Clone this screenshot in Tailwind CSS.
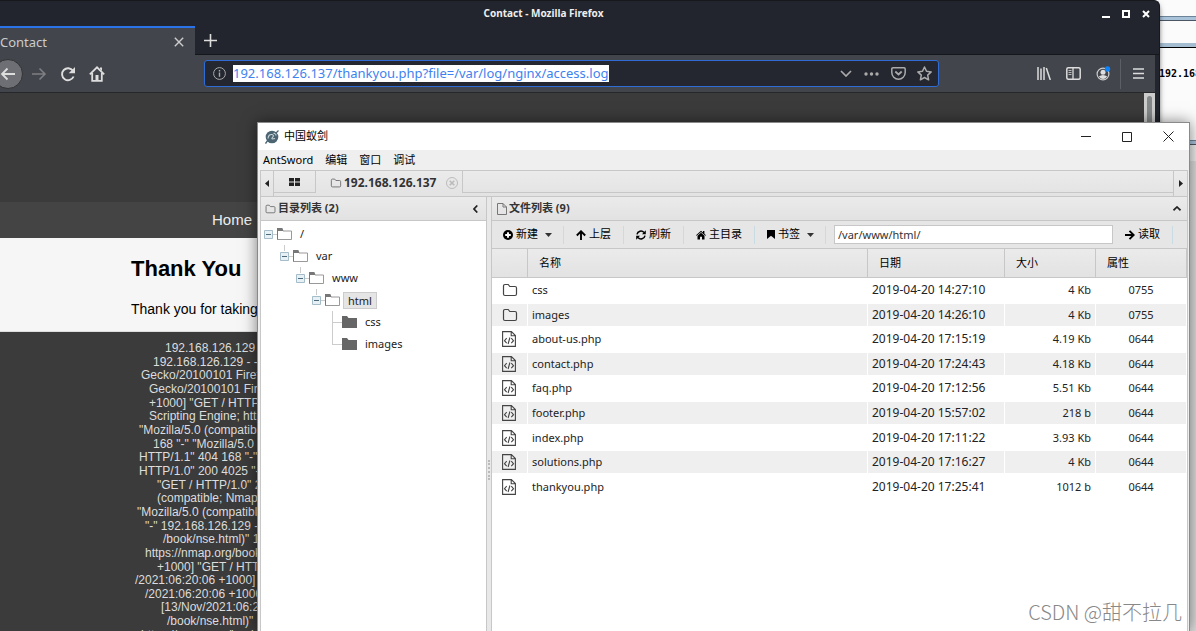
<!DOCTYPE html>
<html lang="zh-CN">
<head>
<meta charset="utf-8">
<meta name="viewport" content="width=device-width, initial-scale=1">
<title>Contact - Mozilla Firefox</title>
<script src="https://cdn.jsdelivr.net/npm/@tailwindcss/browser@4"></script>
</head>
<body class="relative h-screen overflow-hidden bg-[#fbfbfb] font-['Noto_Sans','Noto_Sans_CJK_SC',sans-serif] text-xs text-[#222]">

<svg class="hidden">
  <symbol id="folder" viewBox="0 0 16 14"><path d="M1.5 3.2Q1.5 1.5 3 1.5h3.2l1.6 2H13q1.5 0 1.5 1.5v6q0 1.5-1.5 1.5H3q-1.5 0-1.5-1.5z" fill="none" stroke="currentColor" stroke-width="1.2"/></symbol>
  <symbol id="tree-open" viewBox="0 0 15 12"><path d="M.5 11.5v-11H5l1 2.5h8.500v8.500z" fill="#fff" stroke="#999"/><path d="M0 0h5.300l1 3H1v8.500H0z" fill="#777"/></symbol>
  <symbol id="tree-closed" viewBox="0 0 15 12"><path d="M0 0h5l1.500 2H15v10H0z" fill="#666"/></symbol>
  <symbol id="code" viewBox="0 0 14 16"><path d="M.6.6h8.800l4 4v10.800H.6zM9.200.8v4h4" fill="none" stroke="#444" stroke-width="1.1"/><path d="M4.700 7.200 2.500 9.700l2.200 2.500M9.300 7.200l2.200 2.500-2.200 2.500M7.900 6.500l-1.800 6.500" fill="none" stroke="#444" stroke-width="1.1"/></symbol>
  <symbol id="minus" viewBox="0 0 9 9"><path d="M.5.5h8v8h-8z" fill="#e6f0f5" stroke="#a5bdc9"/><path d="M2 4.500h5" stroke="#4b6b7b"/></symbol>
</svg>

<!-- Window behind the browser, at the right edge of the desktop -->
<div class="absolute inset-y-0 right-0 flex w-10 flex-col bg-[#fbfbfb]">
  <div class="mt-4 h-[5px] border-y border-t-[#6d8498] border-b-[#4a5561] bg-[#a9c3da]"></div>
  <div class="mt-[22px] h-[5px] border-b border-black bg-[#a5bdd0]"></div>
  <div class="mt-5 pl-[3px] text-[10px] leading-3 font-bold text-black font-['DejaVu_Sans_Mono',monospace]">192.168</div>
  <div class="mt-[60px] h-[5px] border-y border-t-[#6d8498] border-b-[#4a5561] bg-[#a9c3da]"></div>
  <div class="h-4 bg-[#eee]"></div>
  <div class="grow bg-[#ddd]"></div>
</div>

<!-- Browser -->
<section class="absolute inset-y-0 left-0 right-9 flex flex-col overflow-hidden rounded-tr-md border-t border-r border-t-[#16181c] border-r-[#16181c] bg-[#22252d] text-[#ddd] shadow-md shadow-black/50">
  <header class="relative flex h-[25px] shrink-0 items-center justify-end gap-1 pr-[5px]">
    <h1 class="absolute inset-x-0 top-1 pr-[72px] text-center text-[10px] leading-4 font-bold text-[#eee]">Contact - Mozilla Firefox</h1>
    <button aria-label="Minimize" class="relative flex size-4 items-center justify-center"><svg class="size-2" viewBox="0 0 8 8"><path d="M0 7h8" stroke="#fff" stroke-width="2"/></svg></button>
    <button aria-label="Maximize" class="relative flex size-4 items-center justify-center"><svg class="size-2" viewBox="0 0 8 8"><path d="M1 1h6v6H1z" fill="none" stroke="#fff" stroke-width="2"/></svg></button>
    <button aria-label="Close" class="relative flex size-4 items-center justify-center"><svg class="size-2" viewBox="0 0 8 8"><path d="m1 1 6 6M7 1 1 7" stroke="#fff" stroke-width="2"/></svg></button>
  </header>
  <div class="flex h-[29px] shrink-0 border-b border-[#15171b]">
    <div class="-mb-px flex w-[195px] items-center justify-between border-t-2 border-[#2a74e8] bg-[#42454c] pr-[10px]">
      <span class="text-[13px] leading-4 text-[#ccc]">Contact</span>
      <button aria-label="Close tab" class="p-px"><svg class="size-[10px]" viewBox="0 0 10 10"><path d="m.8.8 8.400 8.400M9.200.8.8 9.200" stroke="#ccc" stroke-width="1.4"/></svg></button>
    </div>
    <button aria-label="New tab" class="px-[9px]"><svg class="size-[13px]" viewBox="0 0 13 13"><path d="M6.500 0v13M0 6.500h13" stroke="#ddd" stroke-width="1.6"/></svg></button>
  </div>
  <nav aria-label="Toolbar" class="mr-1 flex h-[38px] shrink-0 items-center border-b border-[#25272b] bg-[#42454c]">
    <button aria-label="Back" class="-ml-[7px] flex size-[30px] items-center justify-center rounded-full border border-[#333] bg-[#6d6f74]"><svg class="size-4" viewBox="0 0 16 16"><path d="M15 8H2M7.500 2.500 2 8l5.500 5.500" fill="none" stroke="#ddd" stroke-width="1.800"/></svg></button>
    <button aria-label="Forward" class="ml-2"><svg class="size-4" viewBox="0 0 16 16"><path d="M1 8h13M8.500 2.500 14 8l-5.500 5.500" fill="none" stroke="#7d7f84" stroke-width="1.600"/></svg></button>
    <button aria-label="Reload" class="ml-[13px]"><svg class="size-4" viewBox="0 0 16 16"><path d="M13 4.800A6 6 0 1 0 13.600 10.500" fill="none" stroke="#ddd" stroke-width="1.900"/><path d="M15 1v6.300H8.700z" fill="#ddd"/></svg></button>
    <button aria-label="Home" class="ml-[13px]"><svg class="size-4" viewBox="0 0 16 16"><path d="m.8 8.300 7.200-7 7.200 7M3.200 7v7.800h9.600V7" fill="none" stroke="#ddd" stroke-width="1.800"/><path d="M6.500 15V9h3v6zM11 1.500h2V5l-2-2z" fill="#ddd"/></svg></button>
    <div class="ml-[99px] flex h-[27px] w-[735px] items-center rounded-[3px] border border-[#2f6cd6] bg-[#242730] pr-[6px] pl-2 text-[#aaa]">
      <svg class="mr-[7px] size-[13px] shrink-0" viewBox="0 0 13 13"><circle cx="6.500" cy="6.500" r="5.900" fill="none" stroke="currentColor"/><path d="M6.500 5.500v4.200M6.500 3v1.500" stroke="currentColor" stroke-width="1.400"/></svg>
      <input aria-label="Address" class="field-sizing-content h-[17px] bg-white text-[13px] leading-[17px] text-[#3d82f0] outline-none" value="192.168.126.137/thankyou.php?file=/var/log/nginx/access.log">
      <div class="ml-auto flex items-center gap-3">
        <button aria-label="History"><svg class="h-[7px] w-3" viewBox="0 0 12 7"><path d="m1 1 5 5 5-5" fill="none" stroke="currentColor" stroke-width="1.700"/></svg></button>
        <button aria-label="Page actions"><svg class="h-1 w-[15px]" viewBox="0 0 15 4"><circle cx="2" cy="2" r="1.700" fill="currentColor"/><circle cx="7.500" cy="2" r="1.700" fill="currentColor"/><circle cx="13" cy="2" r="1.700" fill="currentColor"/></svg></button>
        <button aria-label="Save to Pocket" class="-mr-px"><svg class="h-[13px] w-[15px]" viewBox="0 0 15 13"><path d="M2 .8h11q1.200 0 1.200 1.200v3.500a6.700 6.700 0 0 1-13.400 0V2Q.8.800 2 .8z" fill="none" stroke="currentColor" stroke-width="1.500"/><path d="m4.300 4.500 3.200 3 3.200-3" fill="none" stroke="currentColor" stroke-width="1.800"/></svg></button>
        <button aria-label="Bookmark"><svg class="size-[15px]" viewBox="0 0 15 15"><path d="m7.500 1 2 4.300 4.700.6-3.500 3.200.9 4.700-4.100-2.300-4.100 2.300.9-4.700L.8 5.900l4.700-.6z" fill="none" stroke="currentColor" stroke-width="1.500" stroke-linejoin="round"/></svg></button>
      </div>
    </div>
    <div class="ml-auto flex items-center">
      <button aria-label="Library"><svg class="h-[13px] w-[14px]" viewBox="0 0 14 13"><path d="M1 0v13M4 1.500V13M7 0v13" stroke="#ddd" stroke-width="1.500"/><path d="m9.300 1 4 12" stroke="#ddd" stroke-width="1.500"/></svg></button>
      <button aria-label="Sidebar" class="ml-[15px]"><svg class="h-[13px] w-[15px]" viewBox="0 0 15 13"><rect x=".8" y=".8" width="13.400" height="11.400" rx="1.500" fill="none" stroke="#ddd" stroke-width="1.500"/><path d="M7 1v11" stroke="#ddd" stroke-width="1.300"/><path d="M2.500 3.500h3M2.500 5.500h3M2.500 7.500h3" stroke="#bbb"/></svg></button>
      <button aria-label="Account" class="ml-[15px]"><svg class="size-[15px]" viewBox="0 0 15 15"><circle cx="7" cy="8" r="5.900" fill="none" stroke="#ccc" stroke-width="1.200"/><circle cx="7" cy="6.200" r="2.500" fill="#ddd"/><path d="M2.800 10.500q4.200-3 8.400 0Q7 15.500 2.800 10.500z" fill="#ddd"/><circle cx="11.500" cy="2.900" r="2.700" fill="#0a84ff"/></svg></button>
      <span class="ml-[9px] h-[30px] border-l border-[#5c5f66]"></span>
      <button aria-label="Menu" class="mr-[11px] ml-3"><svg class="h-[11px] w-[11px]" viewBox="0 0 11 11"><path d="M0 1h11M0 5.500h11M0 10h11" stroke="#ddd" stroke-width="1.600"/></svg></button>
    </div>
  </nav>
  <div class="mr-1 flex min-h-0 grow overflow-hidden bg-[#3b3b3b] font-['Liberation_Sans',sans-serif]">
    <main class="min-w-0 grow">
      <div class="h-[109px]"></div>
      <div class="flex h-9 items-center bg-[#444] pl-[212px] text-[15px] text-[#eee]"><a href="#">Home</a></div>
      <article class="h-[94px] border-b border-[#ddd] bg-[#f6f6f6] pt-[18px] pl-[131px] text-black">
        <h2 class="text-[22px] leading-[26px] font-bold">Thank You</h2>
        <p class="mt-[18px] text-sm leading-[18px]">Thank you for taking the time to contact us</p>
      </article>
      <div class="mt-[10px] ml-[133px] flex h-[300px] flex-col justify-between leading-[13px] whitespace-nowrap text-[#ddd]">
        <p class="pl-8">192.168.126.129 - -</p>
        <p class="pl-5">192.168.126.129 - - </p>
        <p class="pl-2">Gecko/20100101 Firefox</p>
        <p class="pl-4">Gecko/20100101 Firefox</p>
        <p class="pl-4">+1000] "GET / HTTP/1.0"</p>
        <p class="pl-4">Scripting Engine; https:</p>
        <p class="pl-1.5">"Mozilla/5.0 (compatible;</p>
        <p class="pl-5">168 "-" "Mozilla/5.0 (</p>
        <p class="pl-1.5">HTTP/1.1" 404 168 "-"</p>
        <p class="pl-1.5">HTTP/1.0" 200 4025 "-"</p>
        <p class="pl-6">"GET / HTTP/1.0" 200</p>
        <p class="pl-6">(compatible; Nmap</p>
        <p class="pl-1">"Mozilla/5.0 (compatible;</p>
        <p class="pl-3">"-" 192.168.126.129 - -</p>
        <p class="pl-7.5">/book/nse.html)" 192</p>
        <p class="pl-3">https://nmap.org/book/</p>
        <p class="pl-6">+1000] "GET / HTTP</p>
        <p class="pl-0.5">/2021:06:20:06 +1000] "</p>
        <p class="pl-3">/2021:06:20:06 +1000]</p>
        <p class="pl-7">[13/Nov/2021:06:20</p>
        <p class="pl-8.5">/book/nse.html)" 192</p>
        <p class="pl-2">https://nmap.org/book/</p>
      </div>
    </main>
    <div class="w-[11px] bg-[#ccc] px-[3px] pt-[3px]"><div class="h-24 rounded-full bg-[#858888]"></div></div>
  </div>
</section>

<!-- AntSword -->
<section class="absolute top-[122px] right-[6px] bottom-0 left-[257px] flex flex-col border border-b-0 border-[#8a8a8a] bg-[#efefef] shadow-[0_0_14px_rgba(0,0,0,0.5)]">
  <header class="flex h-[27px] shrink-0 items-center bg-white pr-[15px] pl-[7px]">
    <svg class="size-[14px]" viewBox="0 0 14 14"><circle cx="7" cy="7" r="6.300" fill="#4c6572"/><path d="M3 8.500q.5-4.500 4-4 2.500.8.500 3t2.500 1M8.500 3.500q2.500-.5 2.500 2" fill="none" stroke="#c9d5da" stroke-width="1.100"/><path d="M.5 13.500 3 10M13.500.5 10.500 3.500" stroke="#4c6572" stroke-width="1.300"/></svg>
    <h1 class="ml-[5px] text-[11px] text-black">中国蚁剑</h1>
    <div class="ml-auto flex items-center gap-[31px]">
      <button aria-label="最小化"><svg class="size-[10px]" viewBox="0 0 10 10"><path d="M0 4.500h10" stroke="#222"/></svg></button>
      <button aria-label="最大化"><svg class="size-[10px]" viewBox="0 0 10 10"><path d="M.5.5h9v9h-9z" fill="none" stroke="#222"/></svg></button>
      <button aria-label="关闭"><svg class="size-[11px]" viewBox="0 0 11 11"><path d="m.5.5 10 10M10.500.5l-10 10" stroke="#222"/></svg></button>
    </div>
  </header>
  <nav class="flex h-5 shrink-0 items-center gap-3 pl-[5px] text-[11px] text-black">
    <button>AntSword</button><button>编辑</button><button>窗口</button><button>调试</button>
  </nav>
  <div class="mr-px ml-[2px] flex min-h-0 grow flex-col border border-b-0 border-[#c7c7c7] bg-[#e8e8e8]">
    <div class="flex h-[26px] shrink-0 border-b border-[#c7c7c7] bg-linear-to-b from-[#ebebeb] to-[#e3e3e3]">
      <button aria-label="向左" class="flex w-[13px] items-center justify-center border-r border-[#c7c7c7]"><svg class="h-[7px] w-1" viewBox="0 0 4 7"><path d="M4 0v7L0 3.500z" fill="#222"/></svg></button>
      <button aria-label="主页" class="mb-[3px] flex w-[42px] items-center justify-center border-r border-b border-[#c7c7c7]"><svg class="h-2 w-[11px]" viewBox="0 0 11 8"><path d="M0 0h5v3.500H0zM6 0h5v3.500H6zM0 4.500h5V8H0zM6 4.500h5V8H6z" fill="#222"/></svg></button>
      <div class="mb-[2px] flex w-[146px] items-center pl-[14px]">
        <svg class="h-[10px] w-3 text-[#666]"><use href="#folder"/></svg>
        <span class="ml-[2px] text-xs font-bold text-[#333]">192.168.126.137</span>
        <button aria-label="关闭标签" class="ml-auto pr-1"><svg class="size-3" viewBox="0 0 12 12"><circle cx="6" cy="6" r="5.500" fill="none" stroke="#bbb"/><path d="m3.700 3.700 4.600 4.600M8.300 3.700 3.700 8.300" stroke="#bbb" stroke-width="1.600"/></svg></button>
      </div>
      <div class="mb-[3px] grow border-b border-l border-[#c7c7c7]"></div>
      <button aria-label="向右" class="flex w-[14px] items-center justify-center border-l border-[#c7c7c7]"><svg class="h-[7px] w-1" viewBox="0 0 4 7"><path d="M0 0v7l4-3.500z" fill="#222"/></svg></button>
    </div>
    <div class="flex min-h-0 grow">
      <aside class="flex w-[226px] shrink-0 flex-col border-r border-[#c7c7c7]">
        <div class="flex h-6 shrink-0 items-center border-b border-[#c7c7c7] bg-linear-to-b from-[#ebebeb] to-[#e2e2e2] pr-2 pl-1">
          <svg class="h-[10px] w-[11px] text-[#666]"><use href="#folder"/></svg>
          <h2 class="ml-[2px] text-[11px] font-bold text-[#333]">目录列表 (2)</h2>
          <button aria-label="折叠目录" class="ml-auto"><svg class="h-2 w-[5px]" viewBox="0 0 5 8"><path d="M4.300.5 1 4l3.300 3.500" fill="none" stroke="#222" stroke-width="1.700"/></svg></button>
        </div>
        <div class="grow bg-white pt-[2px] pl-[3px] text-[11px] leading-4">
          <div class="flex h-[22px] items-center"><svg class="size-[9px]"><use href="#minus"/></svg><i class="w-1 border-t border-[#ccc]"></i><svg class="h-3 w-[15px]"><use href="#tree-open"/></svg><span class="ml-2">/</span></div>
          <div class="ml-4">
            <div class="relative flex h-[22px] items-center"><i class="absolute top-0 left-1 h-[6px] border-l border-[#ccc]"></i><svg class="size-[9px]"><use href="#minus"/></svg><i class="w-1 border-t border-[#ccc]"></i><svg class="h-3 w-[15px]"><use href="#tree-open"/></svg><span class="ml-2">var</span></div>
            <div class="ml-4">
              <div class="relative flex h-[22px] items-center"><i class="absolute top-0 left-1 h-[6px] border-l border-[#ccc]"></i><svg class="size-[9px]"><use href="#minus"/></svg><i class="w-1 border-t border-[#ccc]"></i><svg class="h-3 w-[15px]"><use href="#tree-open"/></svg><span class="ml-2">www</span></div>
              <div class="ml-4">
                <div class="relative flex h-[22px] items-center"><i class="absolute top-0 left-1 h-[6px] border-l border-[#ccc]"></i><svg class="size-[9px]"><use href="#minus"/></svg><i class="w-1 border-t border-[#ccc]"></i><svg class="h-3 w-[15px]"><use href="#tree-open"/></svg><span class="ml-[3px] border border-[#ccc] bg-[#e5e5e5] px-1 leading-[15px]">html</span></div>
                <div class="ml-5">
                  <div class="flex h-[22px] items-center border-l border-[#ccc]"><i class="w-[9px] border-t border-[#ccc]"></i><svg class="h-3 w-[15px]"><use href="#tree-closed"/></svg><span class="ml-2">css</span></div>
                  <div class="relative flex h-[22px] items-center"><i class="absolute top-0 left-0 h-[11px] border-l border-[#ccc]"></i><i class="w-[10px] border-t border-[#ccc]"></i><svg class="h-3 w-[15px]"><use href="#tree-closed"/></svg><span class="ml-2">images</span></div>
                </div>
              </div>
            </div>
          </div>
        </div>
      </aside>
      <div class="flex w-1 shrink-0 items-center justify-center"><i class="mt-28 h-5 border-l-2 border-dotted border-[#bbb]"></i></div>
      <section class="flex min-w-0 grow flex-col border-l border-[#c7c7c7]">
        <div class="flex h-6 shrink-0 items-center border-b border-[#c7c7c7] bg-linear-to-b from-[#ebebeb] to-[#e2e2e2] pr-[6px] pl-[5px]">
          <svg class="h-3 w-[10px]" viewBox="0 0 10 12"><path d="M.5.5h5.500l3.500 3.500v7.500h-9zM6 .5V4h3.500" fill="none" stroke="#777"/></svg>
          <h2 class="ml-[2px] text-[11px] font-bold text-[#333]">文件列表 (9)</h2>
          <button aria-label="折叠文件" class="ml-auto"><svg class="h-[5px] w-2" viewBox="0 0 8 5"><path d="M.5 4.300 4 1l3.500 3.300" fill="none" stroke="#222" stroke-width="1.700"/></svg></button>
        </div>
        <div class="flex h-7 shrink-0 items-center gap-3 border-b border-[#c7c7c7] bg-[#e6e6e6] pr-[14px] pl-[11px] text-[11px] whitespace-nowrap text-black">
          <button class="-mr-px flex items-center gap-[3px]"><svg class="size-[10px]" viewBox="0 0 10 10"><circle cx="5" cy="5" r="5"/><path d="M5 2.200v5.600M2.200 5h5.600" stroke="#fff" stroke-width="1.900"/></svg>新建<svg class="ml-1 h-1 w-[7px]" viewBox="0 0 7 4"><path d="M0 0h7L3.500 4z" fill="#333"/></svg></button>
          <i class="h-[18px] border-l border-[#c9dbe3]"></i>
          <button class="flex items-center gap-[3px]"><svg class="size-[10px]" viewBox="0 0 10 10"><path d="M5 10V1.500M.8 5.500 5 1.300l4.200 4.200" fill="none" stroke="#000" stroke-width="1.900"/></svg>上层</button>
          <i class="h-[18px] border-l border-[#c9dbe3]"></i>
          <button class="flex items-center gap-[3px]"><svg class="size-[10px]" viewBox="0 0 10 10"><path d="M1 4.300A4 4 0 0 1 8 2.500M9 5.700A4 4 0 0 1 2 7.500" fill="none" stroke="#000" stroke-width="1.500"/><path d="M9.800.3v4H6zM.2 9.700v-4H4z"/></svg>刷新</button>
          <i class="h-[18px] border-l border-[#c9dbe3]"></i>
          <button class="flex items-center gap-[3px]"><svg class="size-[10px]" viewBox="0 0 10 10"><path d="m5 2.800 3.500 3V9.500H6V6.800H4v2.700H1.500V5.800zM0 5.200 5 .8l2 1.700V1h1.400v2.700L10 5.200l-.6.6L5 2 .6 5.800z"/></svg>主目录</button>
          <i class="h-[18px] border-l border-[#c9dbe3]"></i>
          <button class="-mr-px flex items-center gap-[3px]"><svg class="h-[9px] w-2" viewBox="0 0 8 9"><path d="M0 0h8v9L4 5.800 0 9z"/></svg>书签<svg class="ml-1 h-1 w-[7px]" viewBox="0 0 7 4"><path d="M0 0h7L3.500 4z" fill="#333"/></svg></button>
          <i class="h-[18px] border-l border-[#c9dbe3]"></i>
          <input aria-label="路径" class="-ml-1 h-[19px] min-w-0 grow border border-[#c7c7c7] bg-white px-[3px] text-[11px] text-[#333] outline-none" value="/var/www/html/">
          <button class="flex items-center gap-[3px]"><svg class="size-[10px]" viewBox="0 0 10 10"><path d="M0 5h8.500M4.500.8 8.700 5 4.500 9.200" fill="none" stroke="#000" stroke-width="1.900"/></svg>读取</button>
          <i class="h-[18px] border-l border-[#c9dbe3]"></i>
        </div>
        <div class="grow bg-white">
          <table class="h-[250px] w-full table-fixed border-separate border-spacing-0 text-[11px] leading-4">
            <colgroup><col class="w-9"><col><col class="w-[137px]"><col class="w-[91px]"><col class="w-[91px]"></colgroup>
            <thead class="bg-linear-to-b from-[#ebebeb] to-[#e2e2e2] text-left text-black">
              <tr class="h-[29px]">
                <th class="border-r border-b border-[#c7c7c7]"></th>
                <th class="border-r border-b border-[#c7c7c7] pl-[11px] font-normal">名称</th>
                <th class="border-r border-b border-[#c7c7c7] pl-[11px] font-normal">日期</th>
                <th class="border-r border-b border-[#c7c7c7] pl-[11px] font-normal">大小</th>
                <th class="border-r border-b border-[#c7c7c7] pl-[11px] font-normal">属性</th>
              </tr>
            </thead>
            <tbody id="files"></tbody>
          </table>
        </div>
      </section>
    </div>
  </div>
</section>

<p class="absolute right-[14px] bottom-[5px] text-xl leading-7 font-light text-[#888] font-['Noto_Sans_CJK_SC',sans-serif]">CSDN @甜不拉几</p>

<script>
  const files = [
    ['css', '2019-04-20 14:27:10', '4 Kb', '0755'],
    ['images', '2019-04-20 14:26:10', '4 Kb', '0755'],
    ['about-us.php', '2019-04-20 17:15:19', '4.19 Kb', '0644'],
    ['contact.php', '2019-04-20 17:24:43', '4.18 Kb', '0644'],
    ['faq.php', '2019-04-20 17:12:56', '5.51 Kb', '0644'],
    ['footer.php', '2019-04-20 15:57:02', '218 b', '0644'],
    ['index.php', '2019-04-20 17:11:22', '3.93 Kb', '0644'],
    ['solutions.php', '2019-04-20 17:16:27', '4 Kb', '0644'],
    ['thankyou.php', '2019-04-20 17:25:41', '1012 b', '0644'],
  ];
  document.getElementById('files').innerHTML = files.map(([name, date, size, mode]) => `
    <tr class="even:bg-[#efefef]">
      <td class="border-y border-r border-white pl-[10px]">${name.includes('.')
        ? '<svg class="block h-4 w-[14px]"><use href="#code"/></svg>'
        : '<svg class="block h-[14px] w-4 text-[#444]"><use href="#folder"/></svg>'}</td>
      <td class="border-y border-r border-white pl-1">${name}</td>
      <td class="border-y border-r border-white pl-1 text-xs">${date}</td>
      <td class="border-y border-r border-white pr-1 text-right">${size}</td>
      <td class="border-y border-r border-white text-center">${mode}</td>
    </tr>`).join('');
</script>
</body>
</html>
